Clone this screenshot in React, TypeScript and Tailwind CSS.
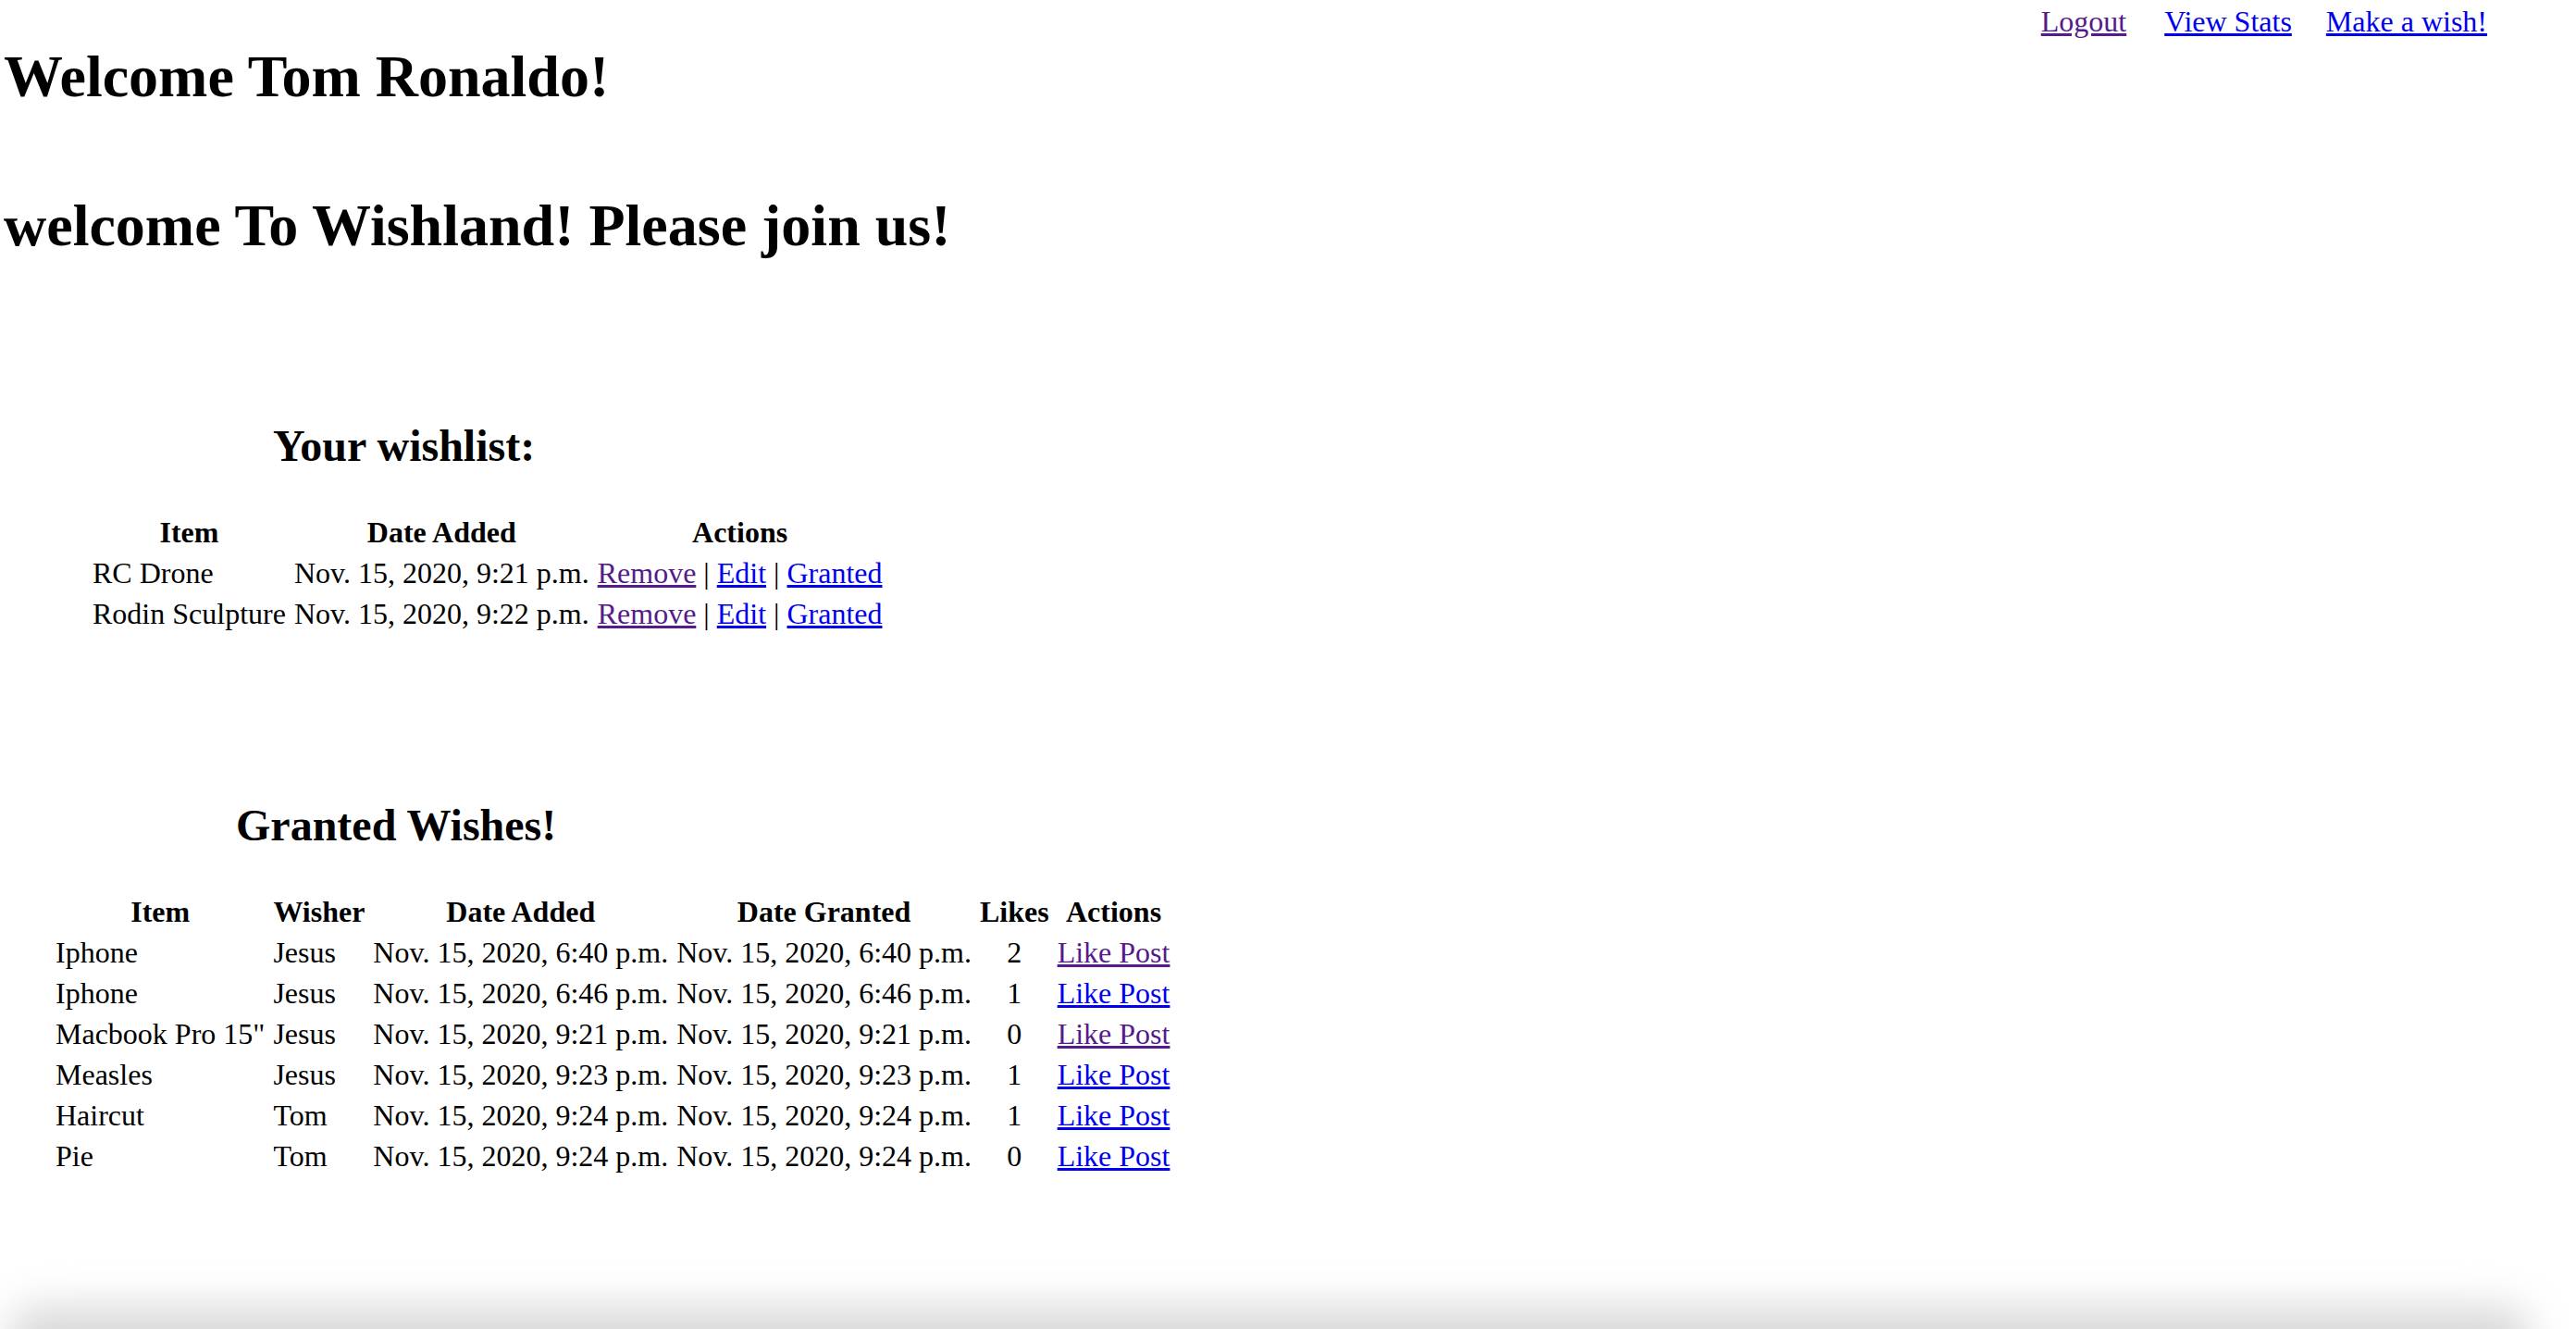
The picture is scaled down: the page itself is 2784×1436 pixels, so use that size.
const VISITED = 'text-[#551a8b] underline'
const LINK = 'text-[#0000ee] underline'

interface Wish {
  item: string
  added: string
}

interface Granted {
  item: string
  wisher: string
  added: string
  granted: string
  likes: number
  visited?: boolean
}

const wishlist: Wish[] = [
  { item: 'RC Drone', added: 'Nov. 15, 2020, 9:21 p.m.' },
  { item: 'Rodin Sculpture', added: 'Nov. 15, 2020, 9:22 p.m.' },
]

const granted: Granted[] = [
  { item: 'Iphone', wisher: 'Jesus', added: 'Nov. 15, 2020, 6:40 p.m.', granted: 'Nov. 15, 2020, 6:40 p.m.', likes: 2, visited: true },
  { item: 'Iphone', wisher: 'Jesus', added: 'Nov. 15, 2020, 6:46 p.m.', granted: 'Nov. 15, 2020, 6:46 p.m.', likes: 1 },
  { item: 'Macbook Pro 15"', wisher: 'Jesus', added: 'Nov. 15, 2020, 9:21 p.m.', granted: 'Nov. 15, 2020, 9:21 p.m.', likes: 0, visited: true },
  { item: 'Measles', wisher: 'Jesus', added: 'Nov. 15, 2020, 9:23 p.m.', granted: 'Nov. 15, 2020, 9:23 p.m.', likes: 1 },
  { item: 'Haircut', wisher: 'Tom', added: 'Nov. 15, 2020, 9:24 p.m.', granted: 'Nov. 15, 2020, 9:24 p.m.', likes: 1 },
  { item: 'Pie', wisher: 'Tom', added: 'Nov. 15, 2020, 9:24 p.m.', granted: 'Nov. 15, 2020, 9:24 p.m.', likes: 0 },
]

const th = 'px-[2px] py-[2px] text-center font-bold'
const td = 'px-[2px] py-[2px] text-left whitespace-nowrap'

export default function App() {
  return (
    <div className="relative min-h-screen overflow-hidden bg-white text-black font-['Liberation_Serif',serif] text-[32px] leading-[36px]">
      <nav className="flex justify-end pr-[96px] pt-[5px]">
        <a href="#" className={VISITED}>Logout</a>
        <a href="#" className={`${LINK} ml-[41px]`}>View Stats</a>
        <a href="#" className={`${LINK} ml-[37px]`}>Make a wish!</a>
      </nav>

      <h1 className="mt-[6px] pl-[4px] text-[64px] leading-[72px] font-bold">Welcome Tom Ronaldo!</h1>
      <h1 className="mt-[89px] pl-[4px] text-[64px] leading-[72px] font-bold">welcome To Wishland! Please join us!</h1>

      <section className="mt-[174px]">
        <h2 className="pl-[295px] text-[48px] leading-[56px] font-bold">Your wishlist:</h2>
        <table className="mt-[41px] ml-[93px] border-separate border-spacing-x-[5px] border-spacing-y-[4px]">
          <thead>
            <tr>
              <th className={th}>Item</th>
              <th className={th}>Date Added</th>
              <th className={th}>Actions</th>
            </tr>
          </thead>
          <tbody>
            {wishlist.map((w) => (
              <tr key={w.item}>
                <td className={td}>{w.item}</td>
                <td className={td}>{w.added}</td>
                <td className={td}>
                  <a href="#" className={VISITED}>Remove</a> |{' '}
                  <a href="#" className={LINK}>Edit</a> |{' '}
                  <a href="#" className={LINK}>Granted</a>
                </td>
              </tr>
            ))}
          </tbody>
        </table>
      </section>

      <section className="mt-[177px]">
        <h2 className="pl-[255px] text-[48px] leading-[56px] font-bold">Granted Wishes!</h2>
        <table className="mt-[41px] ml-[53px] border-separate border-spacing-x-[5px] border-spacing-y-[4px]">
          <thead>
            <tr>
              <th className={th}>Item</th>
              <th className={th}>Wisher</th>
              <th className={th}>Date Added</th>
              <th className={th}>Date Granted</th>
              <th className={th}>Likes</th>
              <th className={th}>Actions</th>
            </tr>
          </thead>
          <tbody>
            {granted.map((g, i) => (
              <tr key={i}>
                <td className={td}>{g.item}</td>
                <td className={td}>{g.wisher}</td>
                <td className={td}>{g.added}</td>
                <td className={td}>{g.granted}</td>
                <td className="px-[2px] py-[2px] text-center">{g.likes}</td>
                <td className={td}>
                  <a href="#" className={g.visited ? VISITED : LINK}>Like Post</a>
                </td>
              </tr>
            ))}
          </tbody>
        </table>
      </section>

      {/* soft window shadow along the bottom edge */}
      <div className="pointer-events-none absolute inset-x-0 bottom-0 h-[90px] overflow-hidden">
        <div className="ml-[10px] mr-[50px] mt-[66px] h-[80px] rounded-[30px] bg-[#d8d8d8] blur-[22px]" />
      </div>
    </div>
  )
}
